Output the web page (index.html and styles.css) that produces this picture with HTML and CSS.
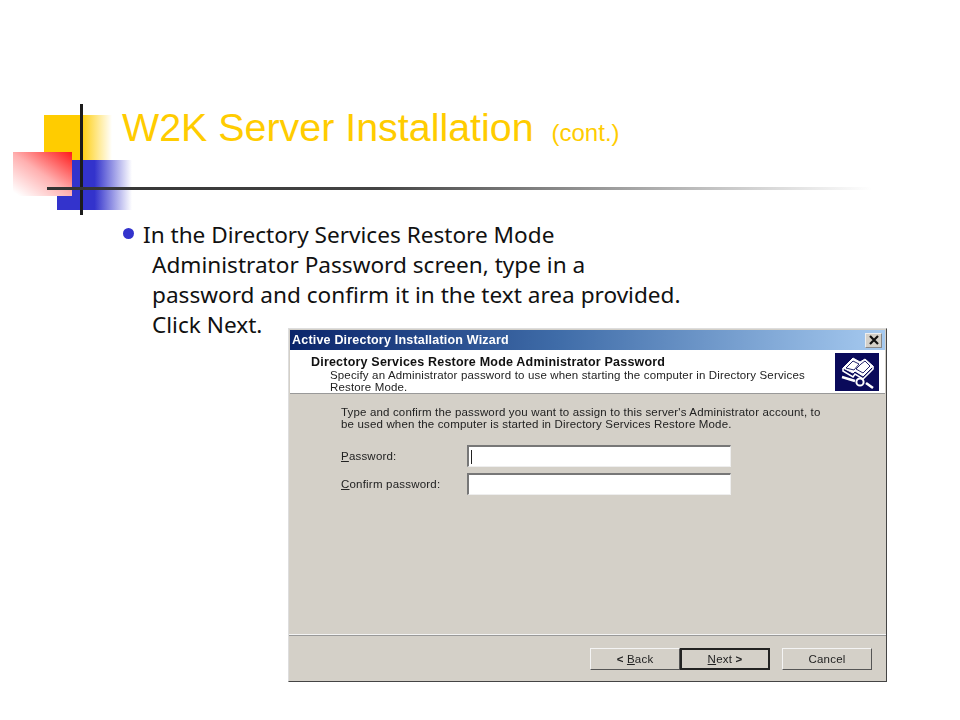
FILE: index.html
```html
<!DOCTYPE html>
<html lang="en">
<head>
    <meta charset="UTF-8">
    <title>W2K Server Installation (cont.)</title>
    <link rel="stylesheet" href="styles.css">
</head>
<body>

<div class="slide">
    <div class="logo">
        <div class="logo-yellow"></div>
        <div class="logo-blue"></div>
        <div class="logo-red"></div>
        <div class="logo-line"></div>
    </div>

    <h1 class="title">W2K Server Installation <small>(cont.)</small></h1>
    <div class="rule"></div>

    <div class="point">
        <span class="bullet"></span>
        <p>In the Directory Services Restore Mode<br>
        <span class="indent">Administrator Password screen, type in a</span><br>
        <span class="indent">password and confirm it in the text area provided.</span><br>
        <span class="indent">Click Next.</span></p>
    </div>

    <div class="dialog">
        <div class="titlebar">
            <span>Active Directory Installation Wizard</span>
            <span class="close">
                <svg width="12" height="10" viewBox="0 0 12 10"><path d="M2 1 L10 9 M10 1 L2 9" stroke="#111" stroke-width="2.2" fill="none"/></svg>
            </span>
        </div>
        <div class="banner">
            <div class="banner-text">
                <h2>Directory Services Restore Mode Administrator Password</h2>
                <p>Specify an Administrator password to use when starting the computer in Directory Services Restore Mode.</p>
            </div>
            <div class="banner-icon">
                <svg width="44" height="38" viewBox="0 0 44 38">
                    <path d="M8 15 L18 5 L25 9 L30 6 L38 13 L28 23 L20 18 L18 20 Z" fill="#fff" stroke="#fff" stroke-width="1"/>
                    <path d="M11 15 L18 8 L24 11 L19 17 Z M26 11 L30 8 L35 13 L28 20 L21 16 Z" fill="#fff" stroke="#0a0a5a" stroke-width="0.9"/>
                    <path d="M8 15 L8 18 L18 24 L20 21 L28 26 L38 16 L38 13" fill="none" stroke="#fff" stroke-width="1.6"/>
                    <path d="M7 24 L20 28 M31 30 L38 35" stroke="#fff" stroke-width="2.6"/>
                    <circle cx="25" cy="29" r="3.6" fill="none" stroke="#fff" stroke-width="2"/>
                </svg>
            </div>
        </div>
        <div class="dialog-body">
            <p class="intro">Type and confirm the password you want to assign to this server's Administrator account, to be used when the computer is started in Directory Services Restore Mode.</p>
            <div class="field">
                <label><u>P</u>assword:</label>
                <div class="input"><span class="caret"></span></div>
            </div>
            <div class="field">
                <label><u>C</u>onfirm password:</label>
                <div class="input"></div>
            </div>
        </div>
        <div class="dialog-footer">
            <button class="btn back"><b>&lt;</b> <u>B</u>ack</button>
            <button class="btn next"><u>N</u>ext <b>&gt;</b></button>
            <button class="btn cancel">Cancel</button>
        </div>
    </div>
</div>

</body>
</html>
```

FILE: styles.css
```css
* {
    margin: 0;
    padding: 0;
    box-sizing: border-box;
}
body {
    background: #fff;
    font-family: "Liberation Sans", Arial, sans-serif;
}
.slide {
    position: relative;
    width: 960px;
    height: 720px;
    padding-top: 103px;
    overflow: hidden;
}

/* slide logo */
.logo-yellow, .logo-blue, .logo-red, .logo-line {
    position: absolute;
}
.logo-yellow {
    left: 44px;
    top: 115px;
    width: 68px;
    height: 46px;
    background: linear-gradient(90deg, #ffcc00 0, #ffcc00 53%, #fff 100%);
}
.logo-blue {
    left: 57px;
    top: 160px;
    width: 75px;
    height: 50px;
    background: linear-gradient(90deg, #3333cc 0, #3333cc 50%, #fff 100%);
}
.logo-red {
    left: 13px;
    top: 152px;
    width: 59px;
    height: 44px;
    background: linear-gradient(215deg, #ff1a1a 0, #ffb0b0 50%, #fff 95%);
}
.logo-line {
    left: 80px;
    top: 104px;
    width: 3px;
    height: 111px;
    background: #1c1c1c;
}

.title {
    margin-left: 122px;
    height: 72px;
    font-size: 39.4px;
    line-height: 48px;
    font-weight: normal;
    color: #ffcc00;
    white-space: nowrap;
}
.title small {
    font-size: 24px;
    margin-left: 7px;
}
.rule {
    position: relative;
    margin-left: 47px;
    width: 825px;
    height: 3px;
    margin-top: 12px;
    background: linear-gradient(90deg, #333 0, #444 40%, #fff 100%);
}

.point {
    display: flex;
    margin-top: 30px;
    margin-left: 122px;
    font-family: "Noto Sans", "DejaVu Sans", sans-serif;
    font-size: 22.6px;
    line-height: 30px;
    color: #111;
    white-space: nowrap;
}
.bullet {
    width: 11px;
    height: 11px;
    margin: 8px 9px 0 1px;
    border-radius: 50%;
    background: #3333cc;
    flex: none;
}
.indent {
    margin-left: 9px;
}

/* wizard window, slightly soft like the pasted screenshot */
.dialog {
    display: flex;
    flex-direction: column;
    width: 599px;
    height: 354px;
    margin-top: -12px;
    margin-left: 288px;
    border: 1px solid #444;
    border-top-color: #ddd;
    border-left-color: #ddd;
    background: #d4d0c8;
    font-size: 11.5px;
    color: #222;
    filter: blur(0.35px);
}
.titlebar {
    display: flex;
    align-items: center;
    justify-content: space-between;
    height: 20px;
    margin: 1px 1px 0 1px;
    padding: 0 3px 0 2px;
    background: linear-gradient(90deg, #0a246a 0, #3f6ca8 45%, #a6caf0 100%);
    color: #fff;
    font-size: 12.5px;
    font-weight: bold;
    letter-spacing: 0.2px;
}
.close {
    display: flex;
    align-items: center;
    justify-content: center;
    width: 17px;
    height: 15px;
    background: #d4d0c8;
    border: 1px solid #888;
    border-top-color: #eee;
    border-left-color: #eee;
}
.banner {
    display: flex;
    justify-content: space-between;
    height: 44px;
    padding: 3px 6px 0 21px;
    margin: 0 1px;
    background: #fff;
    border-bottom: 1px solid #999;
}
.banner h2 {
    margin-top: 3px;
    margin-bottom: 1px;
    font-size: 12.5px;
    line-height: 12px;
    font-weight: bold;
    letter-spacing: 0.2px;
    color: #111;
}
.banner p {
    width: 505px;
    padding-left: 19px;
    font-size: 11.5px;
    line-height: 12px;
    letter-spacing: 0.15px;
}
.banner-icon {
    width: 44px;
    height: 38px;
    background: #0a0a5a;
}
.dialog-body {
    flex: 1;
    padding: 12px 50px 0 52px;
    border-bottom: 1px solid #f4f4f4;
    box-shadow: 0 1px 0 #999;
}
.intro {
    width: 485px;
    line-height: 12px;
    letter-spacing: 0.16px;
    margin-bottom: 15px;
}
.field {
    display: flex;
    align-items: center;
    height: 22px;
    margin-bottom: 6px;
}
.field label {
    width: 126px;
    letter-spacing: 0.2px;
}
.input {
    display: flex;
    align-items: center;
    width: 264px;
    height: 22px;
    padding-left: 2px;
    background: #fff;
    border: 1px solid #eee;
    border-top: 2px solid #777;
    border-left: 2px solid #777;
}
.caret {
    width: 1px;
    height: 14px;
    background: #222;
}
.dialog-footer {
    display: flex;
    justify-content: flex-end;
    height: 46px;
    padding: 13px 14px 0 0;
}
.btn {
    width: 90px;
    height: 22px;
    font-family: inherit;
    font-size: 11.5px;
    color: #222;
    letter-spacing: 0.2px;
    background: #d4d0c8;
    border: 1px solid #555;
    border-top-color: #f4f4f4;
    border-left-color: #f4f4f4;
}
.next {
    border: 2px solid #222;
    margin-right: 12px;
}
```
